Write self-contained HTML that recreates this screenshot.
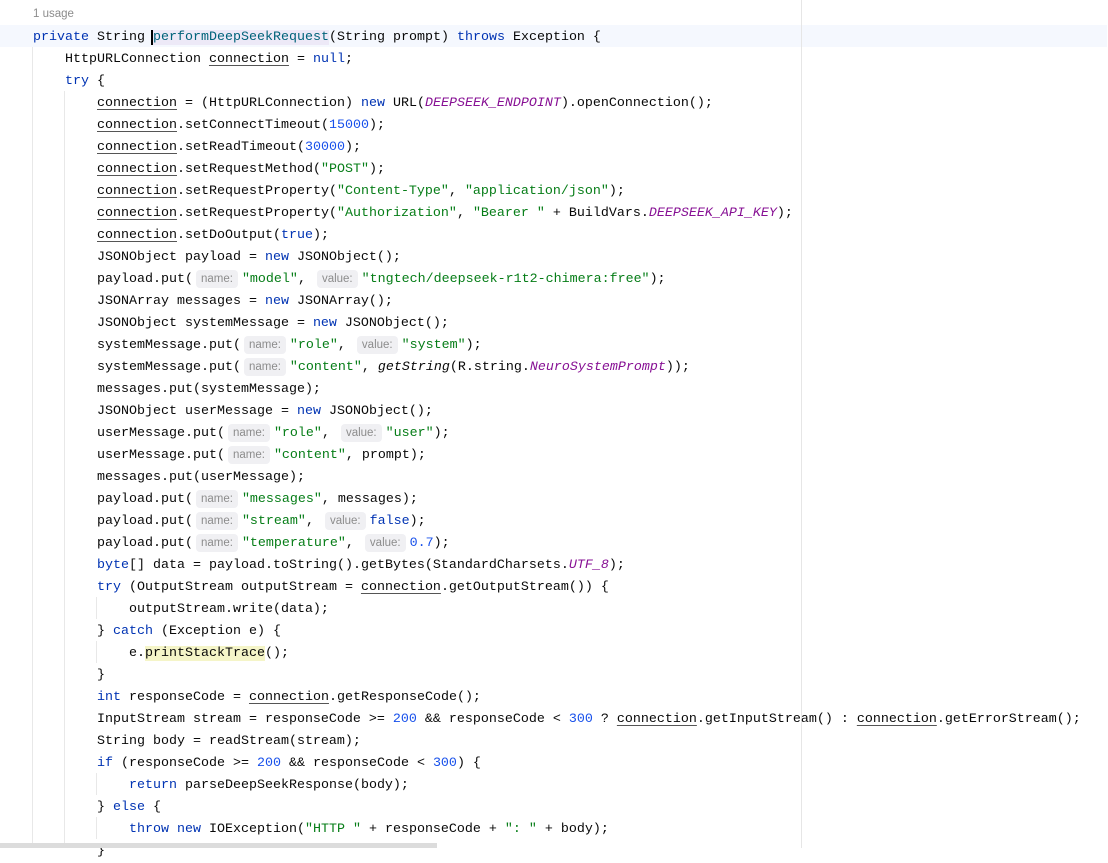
<!DOCTYPE html>
<html><head><meta charset="utf-8"><style>
body{margin:0;width:1108px;height:848px;background:#fff;overflow:hidden;position:relative;font-family:"Liberation Mono",monospace;font-size:13.33px;color:#080808}
.l{position:absolute;left:33px;height:22px;line-height:22px;white-space:pre;margin-top:2px}
.k{color:#0033b3}.s{color:#067d17}.n{color:#1750eb}.st{color:#871094;font-style:italic}.i{font-style:italic}
.m{color:#00627a}
.u{text-decoration:underline;text-decoration-color:#555;text-underline-offset:3px}
.h{display:inline-block;font-family:"Liberation Sans",sans-serif;font-size:11.5px;color:#8c8c8c;background:#f0f0f3;border-radius:4px;height:18px;line-height:18px;vertical-align:top;margin-top:1px;padding:0 5px;margin-left:3px;margin-right:4px}
.g{position:absolute;width:1px;background:#e8e8e8}
</style></head><body>
<div style="position:absolute;left:0;top:25px;width:1107px;height:22px;background:#f5f8fe"></div>
<div style="position:absolute;left:801px;top:0;width:1px;height:848px;background:#e6e6e6"></div>
<div style="position:absolute;left:33px;top:8px;font-family:'Liberation Sans',sans-serif;font-size:11.5px;color:#8c8c8c">1 usage</div>
<div class="g" style="left:32px;top:47px;height:801px"></div>
<div class="g" style="left:64px;top:91px;height:757px"></div>
<div class="g" style="left:96px;top:597px;height:22px"></div>
<div class="g" style="left:96px;top:641px;height:22px"></div>
<div class="g" style="left:96px;top:773px;height:22px"></div>
<div class="g" style="left:96px;top:817px;height:22px"></div>
<div class="l" style="top:25px"><span class="k">private</span> String <span style="border-left:2px solid #000;margin-left:-2px"></span><span class="m" style="background:#ede9f7">performDeepSeekRequest</span>(String prompt) <span class="k">throws</span> Exception {</div>
<div class="l" style="top:47px">    HttpURLConnection <span class="u">connection</span> = <span class="k">null</span>;</div>
<div class="l" style="top:69px">    <span class="k">try</span> {</div>
<div class="l" style="top:91px">        <span class="u">connection</span> = (HttpURLConnection) <span class="k">new</span> URL(<span class="st">DEEPSEEK_ENDPOINT</span>).openConnection();</div>
<div class="l" style="top:113px">        <span class="u">connection</span>.setConnectTimeout(<span class="n">15000</span>);</div>
<div class="l" style="top:135px">        <span class="u">connection</span>.setReadTimeout(<span class="n">30000</span>);</div>
<div class="l" style="top:157px">        <span class="u">connection</span>.setRequestMethod(<span class="s">"POST"</span>);</div>
<div class="l" style="top:179px">        <span class="u">connection</span>.setRequestProperty(<span class="s">"Content-Type"</span>, <span class="s">"application/json"</span>);</div>
<div class="l" style="top:201px">        <span class="u">connection</span>.setRequestProperty(<span class="s">"Authorization"</span>, <span class="s">"Bearer "</span> + BuildVars.<span class="st">DEEPSEEK_API_KEY</span>);</div>
<div class="l" style="top:223px">        <span class="u">connection</span>.setDoOutput(<span class="k">true</span>);</div>
<div class="l" style="top:245px">        JSONObject payload = <span class="k">new</span> JSONObject();</div>
<div class="l" style="top:267px">        payload.put(<span class="h">name:</span><span class="s">"model"</span>, <span class="h">value:</span><span class="s">"tngtech/deepseek-r1t2-chimera:free"</span>);</div>
<div class="l" style="top:289px">        JSONArray messages = <span class="k">new</span> JSONArray();</div>
<div class="l" style="top:311px">        JSONObject systemMessage = <span class="k">new</span> JSONObject();</div>
<div class="l" style="top:333px">        systemMessage.put(<span class="h">name:</span><span class="s">"role"</span>, <span class="h">value:</span><span class="s">"system"</span>);</div>
<div class="l" style="top:355px">        systemMessage.put(<span class="h">name:</span><span class="s">"content"</span>, <span class="i">getString</span>(R.string.<span class="st">NeuroSystemPrompt</span>));</div>
<div class="l" style="top:377px">        messages.put(systemMessage);</div>
<div class="l" style="top:399px">        JSONObject userMessage = <span class="k">new</span> JSONObject();</div>
<div class="l" style="top:421px">        userMessage.put(<span class="h">name:</span><span class="s">"role"</span>, <span class="h">value:</span><span class="s">"user"</span>);</div>
<div class="l" style="top:443px">        userMessage.put(<span class="h">name:</span><span class="s">"content"</span>, prompt);</div>
<div class="l" style="top:465px">        messages.put(userMessage);</div>
<div class="l" style="top:487px">        payload.put(<span class="h">name:</span><span class="s">"messages"</span>, messages);</div>
<div class="l" style="top:509px">        payload.put(<span class="h">name:</span><span class="s">"stream"</span>, <span class="h">value:</span><span class="k">false</span>);</div>
<div class="l" style="top:531px">        payload.put(<span class="h">name:</span><span class="s">"temperature"</span>, <span class="h">value:</span><span class="n">0.7</span>);</div>
<div class="l" style="top:553px">        <span class="k">byte</span>[] data = payload.toString().getBytes(StandardCharsets.<span class="st">UTF_8</span>);</div>
<div class="l" style="top:575px">        <span class="k">try</span> (OutputStream outputStream = <span class="u">connection</span>.getOutputStream()) {</div>
<div class="l" style="top:597px">            outputStream.write(data);</div>
<div class="l" style="top:619px">        } <span class="k">catch</span> (Exception e) {</div>
<div class="l" style="top:641px">            e.<span style="background:#f5f5c8">printStackTrace</span>();</div>
<div class="l" style="top:663px">        }</div>
<div class="l" style="top:685px">        <span class="k">int</span> responseCode = <span class="u">connection</span>.getResponseCode();</div>
<div class="l" style="top:707px">        InputStream stream = responseCode &gt;= <span class="n">200</span> &amp;&amp; responseCode &lt; <span class="n">300</span> ? <span class="u">connection</span>.getInputStream() : <span class="u">connection</span>.getErrorStream();</div>
<div class="l" style="top:729px">        String body = readStream(stream);</div>
<div class="l" style="top:751px">        <span class="k">if</span> (responseCode &gt;= <span class="n">200</span> &amp;&amp; responseCode &lt; <span class="n">300</span>) {</div>
<div class="l" style="top:773px">            <span class="k">return</span> parseDeepSeekResponse(body);</div>
<div class="l" style="top:795px">        } <span class="k">else</span> {</div>
<div class="l" style="top:817px">            <span class="k">throw new</span> IOException(<span class="s">"HTTP "</span> + responseCode + <span class="s">": "</span> + body);</div>
<div class="l" style="top:839px">        }</div>
<div style="position:absolute;left:0;top:843px;width:437px;height:5px;background:#dcdcdc"></div>
</body></html>
